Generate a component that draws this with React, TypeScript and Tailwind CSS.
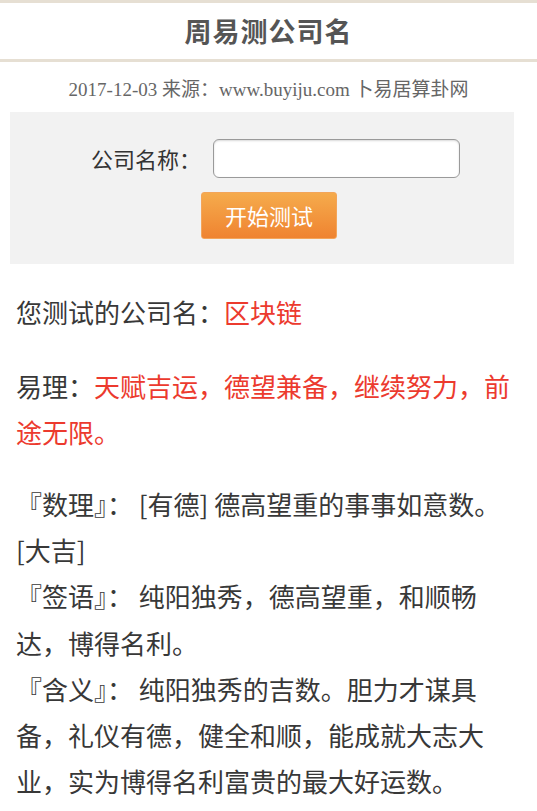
const font = { fontFamily: '"Noto Sans CJK SC", "Noto Sans", sans-serif' }

export default function App() {
  return (
    <div className="w-[537px] min-h-[811px] bg-white text-[#333]" style={font}>
      <div className="border-t-[3px] border-b-[3px] border-[#e6dfd3] h-[62px] flex items-center justify-center">
        <h1 className="text-[27px] font-bold text-[#555] tracking-[1px]">周易测公司名</h1>
      </div>

      <div
        className="h-[50px] pt-[6px] flex items-center justify-center text-[19px] text-[#666]"
        style={{ fontFamily: '"Liberation Serif", "Noto Sans CJK SC", serif' }}
      >
        2017-12-03 来源：www.buyiju.com 卜易居算卦网
      </div>

      <div className="mx-[10px] w-[504px] bg-[#f2f2f2] pt-[27px] pb-[25px]">
        <div className="flex items-center pl-[81px]">
          <span className="text-[22px] text-[#333] w-[122px]">公司名称：</span>
          <input
            type="text"
            className="w-[247px] h-[39px] bg-white border border-[#9a9a9a] rounded-[6px] shadow-[inset_0_1px_2px_rgba(0,0,0,0.15)] outline-none"
          />
        </div>
        <div className="mt-[14px] pl-[191px]">
          <button className="w-[136px] h-[47px] rounded-[3px] border border-[#f3a55a] bg-gradient-to-b from-[#f5ab4c] to-[#ef8330] text-white text-[22px]">
            开始测试
          </button>
        </div>
      </div>

      <div className="px-[16px] pt-[25px] text-[26px] leading-[46px] text-[#383838]">
        <p>
          您测试的公司名：<span className="text-[#ec3a2e]">区块链</span>
        </p>
        <p className="mt-[28px]">
          易理：<span className="text-[#ec3a2e]">天赋吉运，德望兼备，继续努力，前途无限。</span>
        </p>
        <p className="mt-[26px] leading-[46.2px]">
          『数理』： [有德] 德高望重的事事如意数。 [大吉]
          <br />
          『签语』： 纯阳独秀，德高望重，和顺畅达，博得名利。
          <br />
          『含义』： 纯阳独秀的吉数。胆力才谋具备，礼仪有德，健全和顺，能成就大志大业，实为博得名利富贵的最大好运数。
        </p>
      </div>
    </div>
  )
}
